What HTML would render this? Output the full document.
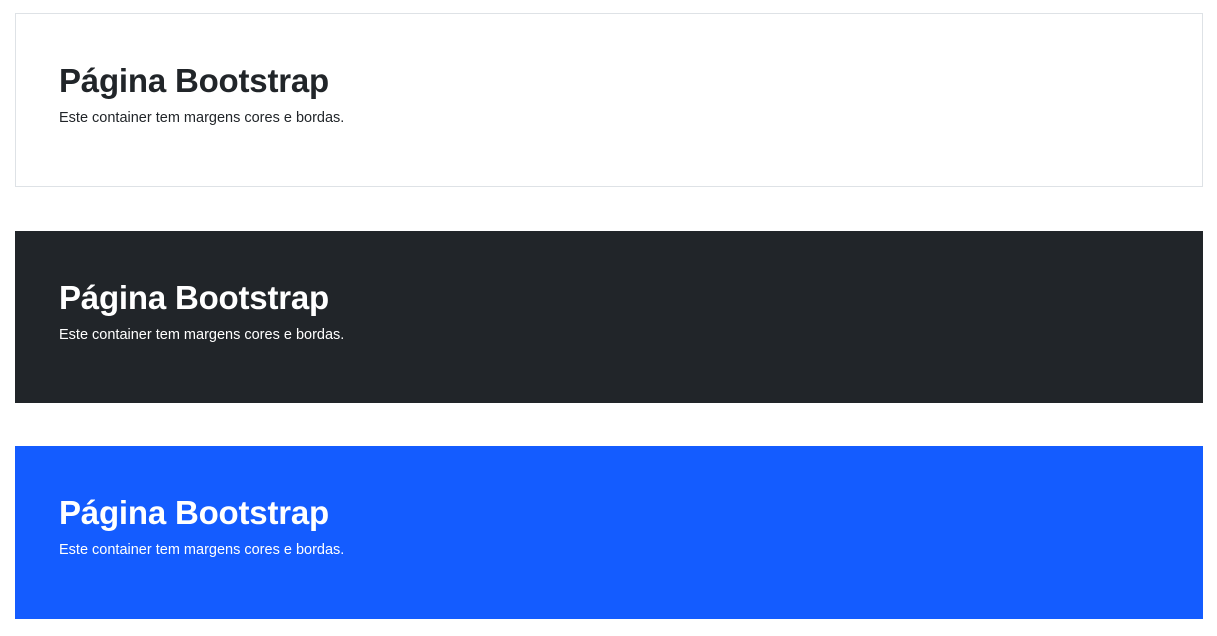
<!DOCTYPE html>
<html><head><meta charset="utf-8"><style>
body{margin:0;background:#fff;font-family:"Liberation Sans",Arial,sans-serif;width:1217px;height:636px;overflow:hidden;position:relative}
.b{position:absolute;left:15px;width:1188px;box-sizing:border-box;padding-left:44px}
h1{margin:0;font-weight:bold;font-size:33px;letter-spacing:-0.2px;line-height:40px}
p{margin:0;font-size:14.5px;line-height:18px;margin-top:8px}
#a{top:13px;height:174px;border:1px solid #dee2e6;color:#212529;padding-top:47px;padding-left:43px}
#c{top:231px;height:172px;background:#212529;color:#fff;padding-top:47px}
#d{top:446px;height:173px;background:#145cff;color:#fff;padding-top:47px}
</style></head><body>
<div class="b" id="a"><h1>Página Bootstrap</h1><p>Este container tem margens cores e bordas.</p></div>
<div class="b" id="c"><h1>Página Bootstrap</h1><p>Este container tem margens cores e bordas.</p></div>
<div class="b" id="d"><h1>Página Bootstrap</h1><p>Este container tem margens cores e bordas.</p></div>
</body></html>
